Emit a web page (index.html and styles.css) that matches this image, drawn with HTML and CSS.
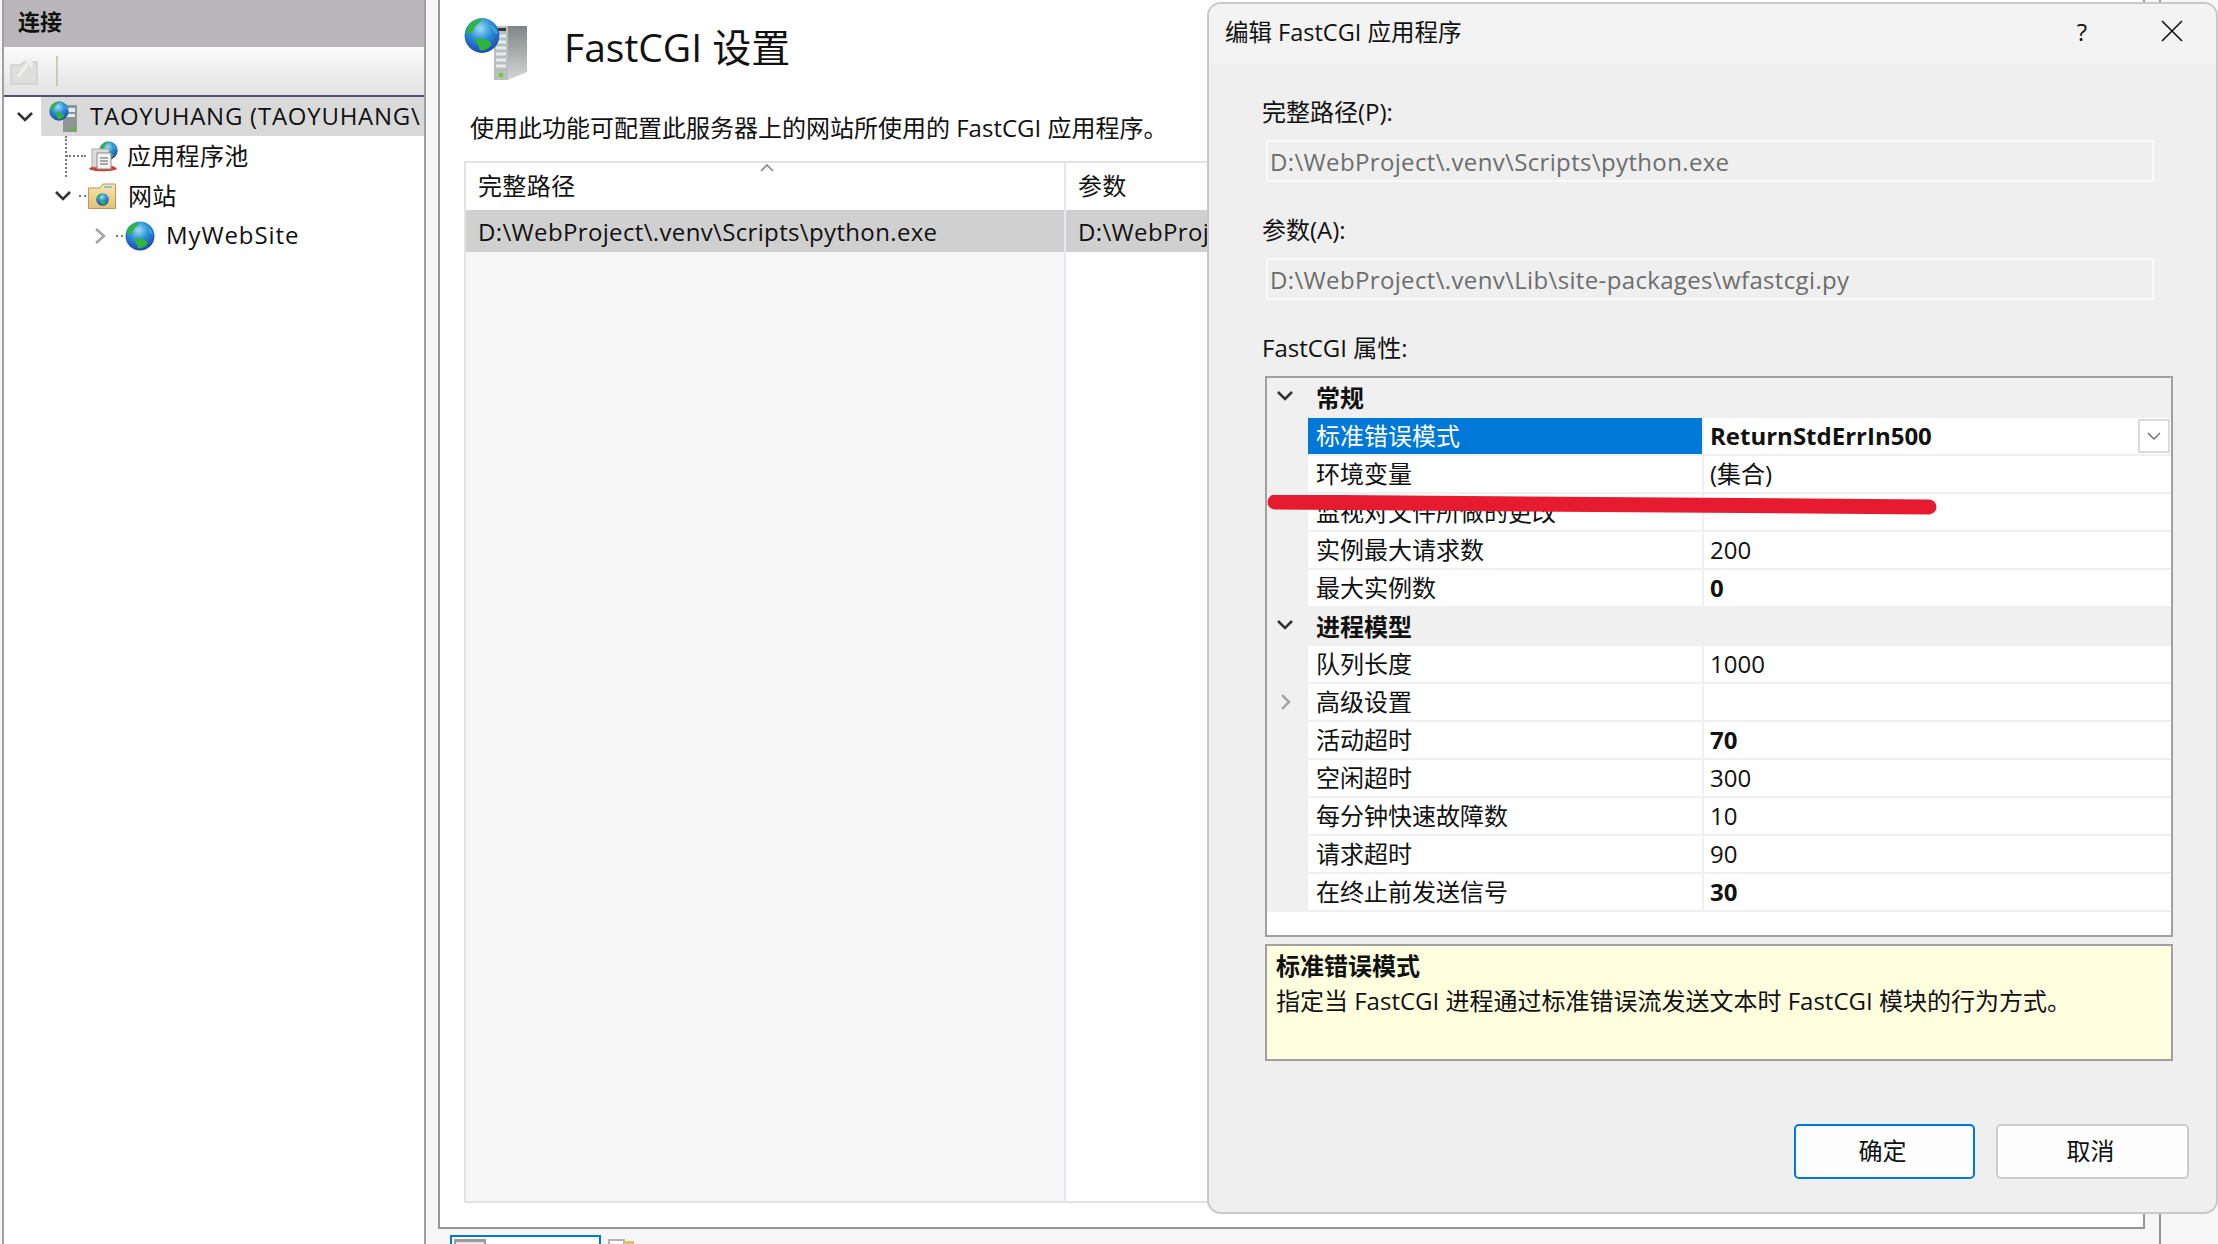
FILE: index.html
```html
<!DOCTYPE html>
<html lang="zh-CN">
<head>
    <meta charset="UTF-8">
    <title>FastCGI 设置</title>
    <link rel="stylesheet" href="styles.css">
</head>
<body>
    <svg class="defs" width="0" height="0">
        <defs>
            <radialGradient id="globeSea" cx="0.45" cy="0.3" r="0.75">
                <stop offset="0" stop-color="#9fdcf5"/>
                <stop offset="0.45" stop-color="#2a8fd8"/>
                <stop offset="1" stop-color="#1b3fa8"/>
            </radialGradient>
            <linearGradient id="serverSide" x1="0" y1="0" x2="0" y2="1">
                <stop offset="0" stop-color="#7f8786"/>
                <stop offset="1" stop-color="#d4d6d4"/>
            </linearGradient>
            <linearGradient id="folderTan" x1="0" y1="0" x2="0" y2="1">
                <stop offset="0" stop-color="#fbe6ae"/>
                <stop offset="1" stop-color="#e3bf74"/>
            </linearGradient>
            <symbol id="globe" viewBox="0 0 30 30">
                <circle cx="15" cy="15" r="14.5" fill="url(#globeSea)"/>
                <path d="M3 8 C6 3 12 1 15 2 C13 5 9 6 8 10 C7 13 4 14 2 13 Z" fill="#2fb53a"/>
                <path d="M9 18 C13 16 20 18 23 22 C21 26 16 28 13 27 C13 23 10 21 9 18 Z" fill="#2fb53a"/>
                <path d="M22 6 C25 7 28 11 28 14 C25 13 23 10 22 6 Z" fill="#3aa8c8"/>
            </symbol>
        </defs>
    </svg>

    <div class="app">
        <aside class="sidebar">
            <div class="sidebar-head">连接</div>
            <div class="toolbar">
                <svg class="tool-icon" width="28" height="28" viewBox="0 0 28 28">
                    <path d="M1 8 H10 L14 5 H27 V27 H1 Z" fill="#dededc" stroke="#cfcfcd" stroke-width="1.5"/>
                    <path d="M8 20 L20 3 M14 3 H21 V10" fill="none" stroke="#efefef" stroke-width="3"/>
                </svg>
                <span class="tool-sep"></span>
            </div>
            <div class="tree">
                <div class="tree-row">
                    <svg class="twist level-0" width="24" height="14" viewBox="0 0 24 14"><path d="M5 3 L12 10 L19 3" class="twist-open"/></svg>
                    <span class="dots dots-short"></span>
                    <div class="node node-selected">
                        <svg class="node-icon" width="28" height="31" viewBox="0 0 28 31">
                            <rect x="14" y="4" width="14" height="27" fill="#8f9796"/>
                            <rect x="16" y="7" width="10" height="4" fill="#e8eaea"/>
                            <rect x="16" y="13" width="10" height="3" fill="#e8eaea"/>
                            <rect x="22" y="26" width="4" height="4" fill="#55c02c"/>
                            <use href="#globe" x="0" y="0" width="20" height="20"/>
                        </svg>
                        <span class="node-label">TAOYUHANG (TAOYUHANG\</span>
                    </div>
                </div>
                <div class="tree-row tree-row-child">
                    <span class="dots dots-pool"></span>
                    <div class="node">
                        <svg class="node-icon" width="30" height="31" viewBox="0 0 30 31">
                            <use href="#globe" x="11" y="0" width="19" height="19"/>
                            <path d="M1 28 C5 22 25 22 29 28 C25 31 5 31 1 28 Z" fill="#d23c30"/>
                            <rect x="4" y="8" width="17" height="18" fill="#dcdcdc" stroke="#a8a8a8"/>
                            <rect x="9" y="12" width="14" height="16" fill="#f4f4f4" stroke="#8c8c8c"/>
                            <path d="M12 17 H20 M12 20 H20 M12 23 H20" stroke="#8c8c8c" stroke-width="1.5"/>
                        </svg>
                        <span class="node-label node-label-tight">应用程序池</span>
                    </div>
                </div>
                <div class="tree-row">
                    <svg class="twist level-1" width="24" height="14" viewBox="0 0 24 14"><path d="M5 3 L12 10 L19 3" class="twist-open"/></svg>
                    <span class="dots dots-short"></span>
                    <div class="node">
                        <svg class="node-icon" width="28" height="26" viewBox="0 0 28 26">
                            <path d="M0.5 5 H12 L15 1 H27.5 V25.5 H0.5 Z" fill="url(#folderTan)" stroke="#b99a5a"/>
                            <rect x="16" y="3" width="8" height="2" fill="#8cc4e8"/>
                            <use href="#globe" x="8" y="10" width="13" height="13"/>
                        </svg>
                        <span class="node-label">网站</span>
                    </div>
                </div>
                <div class="tree-row">
                    <svg class="twist level-2" width="24" height="24" viewBox="0 0 24 24"><path d="M8 5 L16 12 L8 19" class="twist-closed"/></svg>
                    <span class="dots dots-short"></span>
                    <div class="node">
                        <svg class="node-icon" width="30" height="30"><use href="#globe" width="30" height="30"/></svg>
                        <span class="node-label node-label-site">MyWebSite</span>
                    </div>
                </div>
            </div>
        </aside>

        <main class="workspace">
            <section class="frame">
                <header class="page-head">
                    <svg class="page-icon" width="66" height="66" viewBox="0 0 66 66">
                        <path d="M44 10 H63 V56 L44 64 Z" fill="url(#serverSide)"/>
                        <rect x="30" y="10" width="14" height="54" fill="#b9bfbf"/>
                        <rect x="32" y="12" width="10" height="3" fill="#33383a"/>
                        <path d="M32 20 H42 M32 26 H42 M32 32 H42 M32 38 H42 M32 44 H42 M32 50 H42" stroke="#e8ecec" stroke-width="3"/>
                        <rect x="35" y="57" width="4" height="4" fill="#6dd21e"/>
                        <use href="#globe" x="0" y="1" width="36" height="37"/>
                    </svg>
                    <h1 class="page-title">FastCGI 设置</h1>
                </header>
                <p class="page-desc">使用此功能可配置此服务器上的网站所使用的 FastCGI 应用程序。</p>
                <table class="app-table">
                    <thead>
                        <tr>
                            <th class="col-path">完整路径
                                <svg class="sort-caret" width="16" height="10" viewBox="0 0 16 10"><path d="M2 8 L8 2 L14 8" fill="none" stroke="#8a8a8a" stroke-width="1.6"/></svg>
                            </th>
                            <th>参数</th>
                        </tr>
                    </thead>
                    <tbody>
                        <tr class="row-selected">
                            <td>D:\WebProject\.venv\Scripts\python.exe</td>
                            <td>D:\WebProj</td>
                        </tr>
                        <tr class="row-filler">
                            <td></td>
                            <td></td>
                        </tr>
                    </tbody>
                </table>
            </section>
            <div class="tabs">
                <div class="tab tab-active">
                    <svg width="32" height="9" viewBox="0 0 32 9"><rect width="32" height="9" fill="#9a9a9a"/><rect x="2" y="3" width="28" height="6" fill="#e4e4e4"/></svg>
                </div>
                <svg class="tab-icon" width="26" height="9" viewBox="0 0 26 9"><rect x="1" y="1" width="15" height="8" fill="#fff" stroke="#b5b5b5" stroke-width="2"/><rect x="16" y="2" width="10" height="7" fill="#e6bd6c"/></svg>
            </div>
        </main>
    </div>

    <div class="dialog">
        <div class="dialog-title">
            <span class="dialog-name">编辑 FastCGI 应用程序</span>
            <span class="dialog-help">?</span>
            <svg class="dialog-close" width="22" height="22" viewBox="0 0 22 22"><path d="M1 1 L21 21 M21 1 L1 21" stroke="#111" stroke-width="1.6"/></svg>
        </div>
        <div class="dialog-body">
            <label class="field-label">完整路径(P):</label>
            <div class="field-input">D:\WebProject\.venv\Scripts\python.exe</div>
            <label class="field-label field-label-gap">参数(A):</label>
            <div class="field-input">D:\WebProject\.venv\Lib\site-packages\wfastcgi.py</div>
            <label class="field-label field-label-gap">FastCGI 属性:</label>

            <div class="prop-grid">
                <div class="prop-group prop-group-first">
                    <svg class="group-twist" width="20" height="12" viewBox="0 0 20 12"><path d="M3 2 L10 9 L17 2" class="twist-open"/></svg>
                    <span>常规</span>
                </div>
                <div class="prop-row prop-row-selected">
                    <span class="prop-gutter"></span>
                    <span class="prop-name">标准错误模式</span>
                    <span class="prop-value prop-strong">ReturnStdErrIn500</span>
                    <span class="prop-drop"><svg width="16" height="10" viewBox="0 0 16 10"><path d="M2 2 L8 8 L14 2" fill="none" stroke="#666" stroke-width="1.3"/></svg></span>
                </div>
                <div class="prop-row"><span class="prop-gutter"></span><span class="prop-name">环境变量</span><span class="prop-value">(集合)</span></div>
                <div class="prop-row"><span class="prop-gutter"></span><span class="prop-name">监视对文件所做的更改</span><span class="prop-value"></span></div>
                <div class="prop-row"><span class="prop-gutter"></span><span class="prop-name">实例最大请求数</span><span class="prop-value">200</span></div>
                <div class="prop-row"><span class="prop-gutter"></span><span class="prop-name">最大实例数</span><span class="prop-value prop-strong">0</span></div>
                <div class="prop-group">
                    <svg class="group-twist" width="20" height="12" viewBox="0 0 20 12"><path d="M3 2 L10 9 L17 2" class="twist-open"/></svg>
                    <span>进程模型</span>
                </div>
                <div class="prop-row"><span class="prop-gutter"></span><span class="prop-name">队列长度</span><span class="prop-value">1000</span></div>
                <div class="prop-row">
                    <span class="prop-gutter"><svg width="14" height="18" viewBox="0 0 14 18"><path d="M2 2 L9 9 L2 16" fill="none" stroke="#a0a0a0" stroke-width="2.4"/></svg></span>
                    <span class="prop-name">高级设置</span><span class="prop-value"></span>
                </div>
                <div class="prop-row"><span class="prop-gutter"></span><span class="prop-name">活动超时</span><span class="prop-value prop-strong">70</span></div>
                <div class="prop-row"><span class="prop-gutter"></span><span class="prop-name">空闲超时</span><span class="prop-value">300</span></div>
                <div class="prop-row"><span class="prop-gutter"></span><span class="prop-name">每分钟快速故障数</span><span class="prop-value">10</span></div>
                <div class="prop-row"><span class="prop-gutter"></span><span class="prop-name">请求超时</span><span class="prop-value">90</span></div>
                <div class="prop-row"><span class="prop-gutter"></span><span class="prop-name">在终止前发送信号</span><span class="prop-value prop-strong">30</span></div>
                <svg class="red-mark" width="670" height="24" viewBox="0 0 670 24"><path d="M8 7 L662 12" stroke="#e61b30" stroke-width="15" stroke-linecap="round"/></svg>
            </div>

            <div class="prop-help">
                <div class="prop-help-title">标准错误模式</div>
                <div>指定当 FastCGI 进程通过标准错误流发送文本时 FastCGI 模块的行为方式。</div>
            </div>

            <div class="dialog-buttons">
                <button class="btn btn-primary">确定</button>
                <button class="btn btn-cancel">取消</button>
            </div>
        </div>
    </div>
</body>
</html>
```

FILE: styles.css
```css
/* Page */
body {
    margin: 0;
    height: 1244px;
    overflow: hidden;
    background: #f6f6f6;
    color: #111;
    font-family: "Open Sans", "Noto Sans CJK SC", sans-serif;
    font-size: 24px;
}

.defs {
    position: absolute;
}

.app {
    display: flex;
    height: 1244px;
}

.twist-open {
    fill: none;
    stroke: #333;
    stroke-width: 2.6;
}

.twist-closed {
    fill: none;
    stroke: #a6a6a6;
    stroke-width: 2.6;
}

/* Connections panel */
.sidebar {
    box-sizing: border-box;
    width: 424px;
    margin-left: 2px;
    background: #fff;
    border-left: 2px solid #a0a0a0;
    border-right: 2px solid #a0a0a0;
}

.sidebar-head {
    height: 47px;
    padding-left: 14px;
    background: #b9b7ba;
    font-weight: 700;
    font-size: 22px;
    line-height: 43px;
}

.toolbar {
    display: flex;
    align-items: center;
    height: 48px;
    padding-left: 6px;
    background: linear-gradient(#fbfbfb, #e2e2e2);
    border-bottom: 2px solid #4f4f70;
}

.tool-sep {
    width: 2px;
    height: 30px;
    margin-left: 18px;
    background: #cbc9bc;
}

.tree-row {
    position: relative;
    display: flex;
    align-items: center;
    height: 40px;
}

.tree-row:first-child {
    height: 39px;
}

.twist {
    flex: none;
}

.level-0 {
    margin-left: 9px;
}

.level-1 {
    margin-left: 47px;
}

.level-2 {
    margin-left: 84px;
}

.dots {
    flex: none;
    border-top: 2px dotted #777;
}

.dots-short {
    width: 7px;
    margin-left: 4px;
}

.dots-pool {
    width: 20px;
    margin-left: 62px;
}

.dots-pool::before {
    content: "";
    position: absolute;
    left: 61px;
    top: 0;
    height: 41px;
    border-left: 2px dotted #777;
}

.node {
    flex: 1;
    min-width: 0;
    display: flex;
    align-items: center;
    height: 100%;
    overflow: hidden;
    white-space: nowrap;
}

.node-selected {
    background: #d9d9d9;
    margin-left: -7px;
    padding-left: 6px;
    border-radius: 2px 0 0 2px;
}

.node-icon {
    flex: none;
    margin-left: 2px;
}

.node-label {
    margin-left: 12px;
    padding-bottom: 4px;
    letter-spacing: 0.3px;
}

.node-selected .node-label {
    margin-left: 13px;
    padding-bottom: 2px;
    letter-spacing: 0.75px;
}

.node-label-tight {
    margin-left: 9px;
}

.node-label-site {
    margin-left: 11px;
    letter-spacing: 0.9px;
}

/* Main area */
.workspace {
    box-sizing: border-box;
    width: 1735px;
    padding-left: 12px;
    border-right: 2px solid #969696;
    background: #f6f6f6;
}

.frame {
    box-sizing: border-box;
    width: 1707px;
    height: 1229px;
    padding-left: 24px;
    background: #fff;
    border-left: 2px solid #969696;
    border-right: 2px solid #969696;
    border-bottom: 2px solid #969696;
}

.page-head {
    display: flex;
    align-items: center;
    height: 94px;
    padding-top: 1px;
    box-sizing: border-box;
}

.page-icon {
    margin-top: 3px;
}

.page-title {
    margin: 0 0 0 34px;
    font-size: 39px;
    font-weight: 400;
    line-height: 1.2;
}

.page-desc {
    margin: 14px 0 0 6px;
    line-height: 40px;
}

.app-table {
    width: 1640px;
    height: 1042px;
    margin-top: 13px;
    table-layout: fixed;
    border-collapse: collapse;
    border: 2px solid #e2e2e2;
}

.app-table th,
.app-table td {
    padding: 0 12px;
    text-align: left;
    font-weight: 400;
    white-space: nowrap;
    overflow: hidden;
    letter-spacing: 0.35px;
    border-right: 2px solid #e4e8ee;
}

.app-table thead tr {
    height: 48px;
}

.app-table th {
    padding-bottom: 4px;
}

.col-path {
    position: relative;
    width: 574px;
}

.sort-caret {
    position: absolute;
    left: 293px;
    top: 0;
}

.row-selected {
    height: 42px;
    background: #d0d0d0;
}

.row-filler td:first-child {
    background: #f6f6f6;
}

.tabs {
    display: flex;
    padding: 6px 0 0 12px;
    gap: 7px;
    overflow: hidden;
    height: 15px;
}

.tab {
    box-sizing: border-box;
    width: 151px;
    height: 30px;
    padding: 2px;
    background: #fff;
    border: 2px solid #0078d7;
}

.tab svg {
    display: block;
}

.tab-icon {
    margin-top: 4px;
}

/* Edit dialog */
.dialog {
    position: absolute;
    left: 1207px;
    top: 2px;
    right: 0;
    height: 1212px;
    box-sizing: border-box;
    background: #efefef;
    border: 2px solid #c8c8c8;
    border-radius: 14px;
    overflow: hidden;
}

.dialog-title {
    display: flex;
    align-items: center;
    box-sizing: border-box;
    height: 60px;
    padding: 0 0 6px 16px;
    background: #f3f3f3;
    font-size: 24px;
}

.dialog-name {
    flex: 1;
    font-size: 23.5px;
}

.dialog-help {
    margin-right: 74px;
}

.dialog-close {
    margin-right: 33px;
}

.dialog-body {
    padding: 32px 27px 0 53px;
}

.field-label {
    display: block;
    line-height: 32px;
}

.field-label-gap {
    margin-top: 32px;
}

.field-input {
    box-sizing: border-box;
    width: 888px;
    height: 42px;
    margin: 12px 0 0 4px;
    padding-left: 2px;
    border: 2px solid #f9f9f9;
    color: #6d6d6d;
    letter-spacing: 0.35px;
    line-height: 40px;
}

.prop-grid {
    position: relative;
    box-sizing: border-box;
    width: 908px;
    height: 561px;
    margin: 12px 0 0 3px;
    background: #fff;
    border: 2px solid #a0a0a0;
}

.prop-group {
    display: flex;
    align-items: center;
    box-sizing: border-box;
    height: 38px;
    padding-bottom: 4px;
    background: #f0f0f0;
    font-weight: 700;
}

.prop-group-first {
    height: 40px;
}

.group-twist {
    margin: 0 21px 0 8px;
}

.prop-row {
    position: relative;
    display: grid;
    grid-template-columns: 41px 396px 1fr;
    height: 38px;
    box-sizing: border-box;
    border-bottom: 2px solid #f0f0f0;
    line-height: 35px;
    white-space: nowrap;
}

.prop-gutter {
    display: flex;
    align-items: center;
    padding-left: 13px;
    background: #f0f0f0;
}

.prop-name {
    padding-left: 8px;
    border-right: 2px solid #f0f0f0;
}

.prop-value {
    padding-left: 6px;
}

.prop-strong {
    font-weight: 700;
}

.prop-row-selected .prop-name {
    background: #0078d7;
    color: #fff;
}

.prop-drop {
    position: absolute;
    right: 1px;
    top: 1px;
    box-sizing: border-box;
    display: flex;
    align-items: center;
    justify-content: center;
    width: 32px;
    height: 34px;
    background: #fff;
    border: 2px solid #dcdcdc;
}

.red-mark {
    position: absolute;
    left: 0;
    top: 117px;
}

.prop-help {
    box-sizing: border-box;
    width: 908px;
    height: 117px;
    margin: 7px 0 0 3px;
    padding: 2px 9px;
    background: #ffffe0;
    border: 2px solid #a0a0a0;
    line-height: 35px;
}

.prop-help-title {
    font-weight: 700;
}

.dialog-buttons {
    display: flex;
    justify-content: flex-end;
    gap: 21px;
    margin-top: 63px;
}

.btn {
    height: 55px;
    padding: 0 4px 5px 0;
    background: #fdfdfd;
    border-radius: 5px;
    font: inherit;
    color: #111;
}

.btn-primary {
    width: 181px;
    border: 2px solid #0078d7;
}

.btn-cancel {
    width: 193px;
    border: 2px solid #ccc;
}
```
